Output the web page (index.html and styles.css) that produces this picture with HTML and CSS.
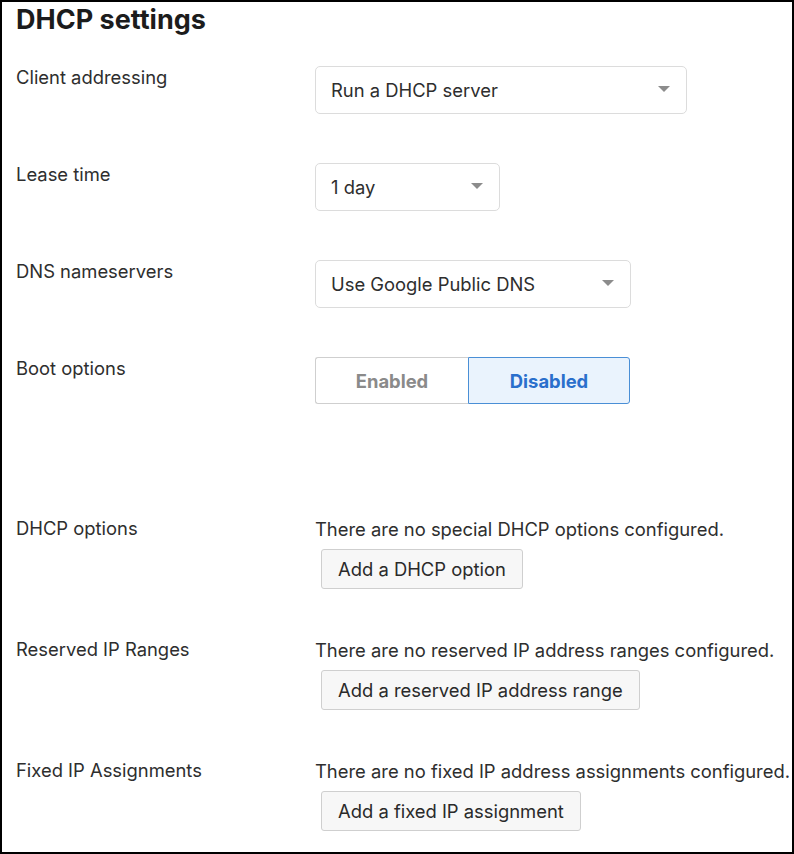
FILE: index.html
```html
<!DOCTYPE html>
<html lang="en">
<head>
    <meta charset="utf-8">
    <meta name="viewport" content="width=device-width, initial-scale=1">
    <title>DHCP settings</title>
    <link rel="stylesheet" href="styles.css">
</head>
<body>
    <div class="frame">
        <h1>DHCP settings</h1>

        <div class="row">
            <div class="label">Client addressing</div>
            <div class="select wide">
                <span>Run a DHCP server</span>
                <span class="caret"></span>
            </div>
        </div>

        <div class="row">
            <div class="label">Lease time</div>
            <div class="select short">
                <span>1 day</span>
                <span class="caret"></span>
            </div>
        </div>

        <div class="row">
            <div class="label">DNS nameservers</div>
            <div class="select medium">
                <span>Use Google Public DNS</span>
                <span class="caret"></span>
            </div>
        </div>

        <div class="row">
            <div class="label">Boot options</div>
            <div class="toggle">
                <div class="seg">Enabled</div>
                <div class="seg active">Disabled</div>
            </div>
        </div>

        <div class="row list first">
            <div class="label">DHCP options</div>
            <div class="stack">
                <p class="note">There are no special DHCP options configured.</p>
                <a class="btn">Add a DHCP option</a>
            </div>
        </div>

        <div class="row list">
            <div class="label">Reserved IP Ranges</div>
            <div class="stack">
                <p class="note">There are no reserved IP address ranges configured.</p>
                <a class="btn">Add a reserved IP address range</a>
            </div>
        </div>

        <div class="row list">
            <div class="label">Fixed IP Assignments</div>
            <div class="stack">
                <p class="note">There are no fixed IP address assignments configured.</p>
                <a class="btn">Add a fixed IP assignment</a>
            </div>
        </div>
    </div>
</body>
</html>
```

FILE: styles.css
```css
body {
    margin: 0;
    padding: 0;
    background: #fff;
    font-family: Inter, "Noto Sans", sans-serif;
    color: #2e2e2e;
}
.frame {
    box-sizing: border-box;
    width: 794px;
    height: 854px;
    border: 2px solid #000;
    padding: 0 0 0 14px;
    overflow: hidden;
}
h1 {
    font-size: 27px;
    font-weight: 700;
    color: #1c1c1c;
    margin: 3px 0 0;
    line-height: 30px;
}
.row {
    display: grid;
    grid-template-columns: 299px 1fr;
    margin-top: 31px;
    font-size: 18.4px;
    line-height: 24px;
}
.row + .row {
    margin-top: 49px;
}
.label {
    margin-top: -1px;
}
.select {
    box-sizing: border-box;
    height: 48px;
    border: 1px solid #dcdcdc;
    border-radius: 5px;
    display: flex;
    align-items: center;
    justify-content: space-between;
    padding: 0 16px 0 15px;
    color: #2e2e2e;
}
.wide { width: 372px; }
.short { width: 185px; }
.medium { width: 316px; }
.caret {
    width: 0;
    height: 0;
    border-left: 6px solid transparent;
    border-right: 6px solid transparent;
    border-top: 6px solid #8c8c8c;
    margin-top: -3px;
}
.toggle {
    display: flex;
    width: 315px;
    height: 47px;
}
.seg {
    box-sizing: border-box;
    flex: 0 0 153px;
    display: flex;
    align-items: center;
    justify-content: center;
    border: 1px solid #cfcfcf;
    border-right: none;
    border-radius: 3px 0 0 3px;
    font-weight: 700;
    color: #8a8a8a;
}
.seg.active {
    flex: 1;
    border: 1px solid #4a8fd6;
    border-radius: 0 3px 3px 0;
    background: #eaf3fd;
    color: #2a6fcc;
}
.row.list.first {
    margin-top: 113px;
}
.row.list + .row.list {
    margin-top: 49px;
}
.stack {
    display: flex;
    flex-direction: column;
    align-items: flex-start;
}
.note {
    margin: 0;
    white-space: nowrap;
}
.btn {
    box-sizing: border-box;
    height: 40px;
    line-height: 38px;
    margin: 8px 0 0 6px;
    padding: 0 16px;
    border: 1px solid #cfcfcf;
    border-radius: 3px;
    background: #f7f7f7;
    color: #2a2a2a;
    cursor: pointer;
}
```
